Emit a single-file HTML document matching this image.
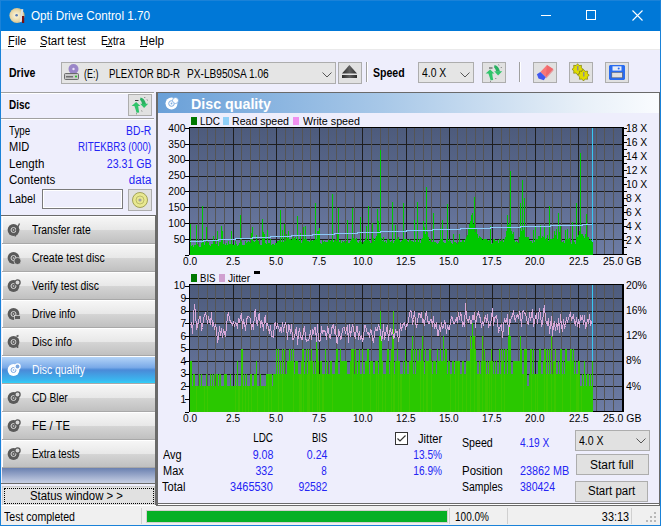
<!DOCTYPE html>
<html><head><meta charset="utf-8"><style>
*{margin:0;padding:0;box-sizing:border-box}
html,body{width:661px;height:526px;overflow:hidden;background:#EEEEFC;font-family:"Liberation Sans",sans-serif}
.t{position:absolute;white-space:pre;transform-origin:0 0}
.r{position:absolute}
svg{position:absolute;left:0;top:0}
</style></head><body>
<div class="r" style="left:0px;top:0px;width:661px;height:31px;background:#0078D7"></div>
<div class="t" style="left: 31px; top: 9.92px; font-size: 12.5px; line-height: 12.5px; color: rgb(255, 255, 255); transform: scaleX(0.936);">Opti Drive Control 1.70</div>
<div class="r" style="left:541px;top:15px;width:10px;height:1px;background:#fff"></div>
<div class="r" style="left:586px;top:10px;width:10px;height:10px;border:1px solid #fff"></div>
<svg width="661" height="30" style="left:0;top:0"><path d="M632.5 10.5 L642.5 20.5 M642.5 10.5 L632.5 20.5" stroke="#fff" stroke-width="1.1"></path></svg>
<svg width="20" height="20" style="left:8px;top:6px" viewBox="0 0 20 20">
<defs><radialGradient id="dg" cx="0.45" cy="0.5" r="0.6"><stop offset="0" stop-color="#fff8e0"></stop><stop offset="0.6" stop-color="#e8d8a8"></stop><stop offset="1" stop-color="#c8b078"></stop></radialGradient></defs>
<circle cx="9" cy="9.5" r="7.6" fill="url(#dg)"></circle><circle cx="8.6" cy="9.3" r="1.3" fill="#5a7ab0"></circle>
<rect x="12.5" y="3" width="2" height="13" fill="#e0e0e0" transform="rotate(8 13 9)"></rect><rect x="14" y="10" width="2.2" height="7" fill="#7a1010"></rect></svg>
<div class="r" style="left:0px;top:0px;width:1px;height:526px;background:#1a82d8"></div>
<div class="r" style="left:0px;top:0px;width:661px;height:1px;background:#1a82d8"></div>
<div class="r" style="left:660px;top:0px;width:1px;height:526px;background:#1a82d8"></div>
<div class="r" style="left:0px;top:525px;width:661px;height:1px;background:#1a82d8"></div>
<div class="r" style="left:1px;top:31px;width:659px;height:18px;background:#fff"></div>
<div class="r" style="left:1px;top:49px;width:659px;height:1px;background:#EAEAEA"></div>
<div class="t" style="left: 8.2px; top: 35.34px; font-size: 12px; line-height: 12px; color: rgb(0, 0, 0); transform: scaleX(0.9409);">File</div>
<div class="t" style="left: 40px; top: 35.34px; font-size: 12px; line-height: 12px; color: rgb(0, 0, 0); transform: scaleX(0.9535);">Start test</div>
<div class="t" style="left: 100.8px; top: 35.34px; font-size: 12px; line-height: 12px; color: rgb(0, 0, 0); transform: scaleX(0.8567);">Extra</div>
<div class="t" style="left: 139.5px; top: 35.34px; font-size: 12px; line-height: 12px; color: rgb(0, 0, 0); transform: scaleX(0.9722);">Help</div>
<div class="r" style="left:8px;top:46px;width:6px;height:1px;background:#000"></div>
<div class="r" style="left:40px;top:46px;width:6px;height:1px;background:#000"></div>
<div class="r" style="left:106px;top:46px;width:6px;height:1px;background:#000"></div>
<div class="r" style="left:140px;top:46px;width:7px;height:1px;background:#000"></div>
<div class="t" style="left: 9.4px; top: 67.34px; font-size: 12px; line-height: 12px; color: rgb(0, 0, 0); font-weight: bold; transform: scaleX(0.8791);">Drive</div>
<div class="r" style="left:61px;top:62px;width:275px;height:22px;background:#E5E5E5;border:1px solid #ADADAD"></div>
<div class="t" style="left: 84.4px; top: 67.84px; font-size: 12px; line-height: 12px; color: rgb(0, 0, 0); transform: scaleX(0.7444);">(E:)</div>
<div class="t" style="left: 108.7px; top: 67.84px; font-size: 12px; line-height: 12px; color: rgb(0, 0, 0); transform: scaleX(0.8025);">PLEXTOR BD-R</div>
<div class="t" style="left: 186.5px; top: 67.84px; font-size: 12px; line-height: 12px; color: rgb(0, 0, 0); transform: scaleX(0.8444);">PX-LB950SA 1.06</div>
<svg width="12" height="8" style="left:322px;top:71px"><path d="M0.5 1.5 L5 6 L9.5 1.5" stroke="#555" stroke-width="1" fill="none"></path></svg>
<svg width="18" height="18" style="left:63px;top:63px" viewBox="0 0 18 18">
<circle cx="10.5" cy="6" r="5" fill="#9a86c8"></circle><circle cx="10.5" cy="6" r="1.2" fill="#e8e0f8"></circle>
<rect x="1.5" y="10.5" width="14" height="6" rx="1" fill="#c8c8c8" stroke="#606060" stroke-width="0.9"></rect>
<rect x="3" y="13" width="7" height="1.5" fill="#707070"></rect><circle cx="13" cy="13.6" r="1" fill="#20c020"></circle></svg>
<div class="r" style="left:338px;top:62px;width:24px;height:22px;background:#E1E1E1;border:1px solid #ADADAD"></div>
<svg width="24" height="22" style="left:338px;top:62px"><defs><linearGradient id="ej" x1="0" y1="0" x2="1" y2="0"><stop offset="0" stop-color="#2a2a2a"></stop><stop offset="0.5" stop-color="#606060"></stop><stop offset="1" stop-color="#2a2a2a"></stop></linearGradient></defs><path d="M4 11.4 L11.4 3 L19 11.4 Z" fill="url(#ej)"></path><rect x="4" y="13" width="15" height="3" fill="url(#ej)"></rect></svg>
<div class="r" style="left:366px;top:62px;width:1px;height:20px;background:#A0A0A0"></div>
<div class="r" style="left:367px;top:62px;width:1px;height:20px;background:#fff"></div>
<div class="t" style="left: 373px; top: 67.34px; font-size: 12px; line-height: 12px; color: rgb(0, 0, 0); font-weight: bold; transform: scaleX(0.8802);">Speed</div>
<div class="r" style="left:418px;top:62px;width:56px;height:21px;background:#E5E5E5;border:1px solid #ADADAD"></div>
<div class="t" style="left: 421.8px; top: 67.34px; font-size: 12px; line-height: 12px; color: rgb(0, 0, 0); transform: scaleX(0.8633);">4.0 X</div>
<svg width="12" height="8" style="left:460px;top:71px"><path d="M0.5 1.5 L5 6 L9.5 1.5" stroke="#555" stroke-width="1" fill="none"></path></svg>
<div class="r" style="left:482px;top:62px;width:24px;height:21px;background:#E1E1E1;border:1px solid #ADADAD"></div>
<svg width="24" height="21" style="left:482px;top:62px" viewBox="0 0 24 21">
<path d="M3.6 11.6 L8.1 7.4 L12.4 11.6 L10.2 11.6 Q10.6 15.2 11.2 18 L8.6 18.2 Q7.6 15 6.4 11.6 Z" fill="#2fc46a"></path>
<path d="M12.2 9.3 L20.2 9.3 L16.1 13.6 Z" fill="#2fc46a"></path>
<path d="M12.6 3 Q16.6 4 18 9.4 L14.2 9.4 Q13.6 6.6 12 5.2 Z" fill="#2ab062"></path>
<rect x="7" y="5.5" width="3.5" height="1" fill="#404040"></rect>
<path d="M8 19 L9 19.6 M13.6 16 L14 17 M16.5 2.5 L17 3.5 M19 5 L19.5 6" stroke="#505050" stroke-width="0.7"></path></svg>
<div class="r" style="left:519px;top:62px;width:1px;height:20px;background:#A0A0A0"></div>
<div class="r" style="left:520px;top:62px;width:1px;height:20px;background:#fff"></div>
<div class="r" style="left:533px;top:62px;width:24px;height:21px;background:#E1E1E1;border:1px solid #ADADAD"></div>
<svg width="24" height="21" style="left:533px;top:62px" viewBox="0 0 24 21">
<path d="M7.4 9.9 L14 2.9 L20.2 6.9 L12.8 15.3 Z" fill="#f87878"></path><path d="M14 2.9 L20.2 6.9 L20.5 8.5 L13.2 16.5 L12.8 15.3 Z" fill="#e85a60" opacity="0.5"></path>
<path d="M3.9 12.3 L7.4 9.9 L12.8 15.3 L10.8 18.3 L5.5 16.5 Z" fill="#4058f0"></path></svg>
<div class="r" style="left:569px;top:62px;width:24px;height:21px;background:#E1E1E1;border:1px solid #ADADAD"></div>
<svg width="24" height="21" style="left:569px;top:62px" viewBox="0 0 24 21">
<polygon points="14.20,7.30 12.33,8.84 12.56,11.26 10.14,11.03 8.60,12.90 7.06,11.03 4.64,11.26 4.87,8.84 3.00,7.30 4.87,5.76 4.64,3.34 7.06,3.57 8.60,1.70 10.14,3.57 12.56,3.34 12.33,5.76" fill="#e0dc00" stroke="#707000" stroke-width="0.6" stroke-linejoin="round"></polygon>
<polygon points="20.30,13.20 18.36,14.80 18.60,17.30 16.10,17.06 14.50,19.00 12.90,17.06 10.40,17.30 10.64,14.80 8.70,13.20 10.64,11.60 10.40,9.10 12.90,9.34 14.50,7.40 16.10,9.34 18.60,9.10 18.36,11.60" fill="#e0dc00" stroke="#707000" stroke-width="0.6" stroke-linejoin="round"></polygon>
<rect x="8" y="4" width="1.5" height="4.5" fill="#909090"></rect><rect x="14" y="10" width="1.5" height="4.5" fill="#909090"></rect></svg>
<div class="r" style="left:605px;top:62px;width:24px;height:21px;background:#E1E1E1;border:1px solid #ADADAD"></div>
<svg width="24" height="21" style="left:605px;top:62px" viewBox="0 0 24 21">
<path d="M4 4 L5 3 L19 3 L20 4 L20 17 L19 18 L5 18 L4 17 Z" fill="#2a6cf0"></path><rect x="7.5" y="4.3" width="9" height="4.3" fill="#e8eef8"></rect><circle cx="13.7" cy="6.4" r="1" fill="#2a6cf0"></circle><rect x="6.8" y="10.3" width="10.5" height="5.5" fill="#e0e0e0" stroke="#505a70" stroke-width="0.6"></rect></svg>
<div class="r" style="left:1px;top:92px;width:153px;height:1px;background:#A0A0A0"></div>
<div class="r" style="left:1px;top:93px;width:153px;height:1px;background:#fff"></div>
<div class="t" style="left: 9px; top: 99.34px; font-size: 12px; line-height: 12px; color: rgb(0, 0, 0); font-weight: bold; transform: scaleX(0.8281);">Disc</div>
<div class="r" style="left:128px;top:94px;width:24px;height:22px;background:#E1E1E1;border:1px solid #ADADAD"></div>
<svg width="24" height="22" style="left:128px;top:94px" viewBox="0 0 24 21">
<path d="M3.6 11.6 L8.1 7.4 L12.4 11.6 L10.2 11.6 Q10.6 15.2 11.2 18 L8.6 18.2 Q7.6 15 6.4 11.6 Z" fill="#2fc46a"></path>
<path d="M12.2 9.3 L20.2 9.3 L16.1 13.6 Z" fill="#2fc46a"></path>
<path d="M12.6 3 Q16.6 4 18 9.4 L14.2 9.4 Q13.6 6.6 12 5.2 Z" fill="#2ab062"></path>
<rect x="7" y="5.5" width="3.5" height="1" fill="#404040"></rect>
<path d="M8 19 L9 19.6 M13.6 16 L14 17 M16.5 2.5 L17 3.5 M19 5 L19.5 6" stroke="#505050" stroke-width="0.7"></path></svg>
<div class="r" style="left:1px;top:118px;width:153px;height:1px;background:#A0A0A0"></div>
<div class="r" style="left:1px;top:119px;width:153px;height:1px;background:#fff"></div>
<div class="t" style="left: 9px; top: 125.34px; font-size: 12px; line-height: 12px; color: rgb(0, 0, 0); transform: scaleX(0.8149);">Type</div>
<div class="t" style="right: 509.5px; top: 125.34px; font-size: 12px; line-height: 12px; color: rgb(36, 36, 244); transform-origin: 100% 0px; transform: scaleX(0.8622);">BD-R</div>
<div class="t" style="left: 9px; top: 141.34px; font-size: 12px; line-height: 12px; color: rgb(0, 0, 0); transform: scaleX(0.9227);">MID</div>
<div class="t" style="right: 509.5px; top: 141.34px; font-size: 12px; line-height: 12px; color: rgb(36, 36, 244); transform-origin: 100% 0px; transform: scaleX(0.8108);">RITEKBR3 (000)</div>
<div class="t" style="left: 9px; top: 157.84px; font-size: 12px; line-height: 12px; color: rgb(0, 0, 0); transform: scaleX(0.9645);">Length</div>
<div class="t" style="right: 509.5px; top: 157.84px; font-size: 12px; line-height: 12px; color: rgb(36, 36, 244); transform-origin: 100% 0px; transform: scaleX(0.8875);">23.31 GB</div>
<div class="t" style="left: 9px; top: 174.34px; font-size: 12px; line-height: 12px; color: rgb(0, 0, 0); transform: scaleX(0.9619);">Contents</div>
<div class="t" style="right: 509.5px; top: 174.34px; font-size: 12px; line-height: 12px; color: rgb(36, 36, 244); transform-origin: 100% 0px; transform: scaleX(0.9632);">data</div>
<div class="t" style="left: 9px; top: 193.34px; font-size: 12px; line-height: 12px; color: rgb(0, 0, 0); transform: scaleX(0.8987);">Label</div>
<div class="r" style="left:42px;top:189px;width:81px;height:20px;background:#EEEEFC;border:1px solid #7A7A7A;box-shadow:inset 0 0 0 1px #fff"></div>
<div class="r" style="left:128px;top:189px;width:24px;height:22px;background:#E1E1E1;border:1px solid #ADADAD"></div>
<svg width="24" height="22" style="left:128px;top:189px" viewBox="0 0 24 22">
<circle cx="12" cy="11" r="7.5" fill="#e8e890" stroke="#909040" stroke-width="0.8"></circle><circle cx="12" cy="11" r="4" fill="none" stroke="#b0b060" stroke-width="0.8"></circle><circle cx="12" cy="11" r="1.6" fill="#a0a0a0"></circle></svg>
<div class="r" style="left:1px;top:215px;width:156px;height:1px;background:#6A6A6A"></div>
<div class="r" style="left:155px;top:215px;width:2px;height:290px;background:#6A6A6A"></div>
<div class="r" style="left:2px;top:216px;width:153px;height:27px;background:linear-gradient(#f6f6f6 0%,#e8e8e8 48%,#d4d4d4 52%,#c0c0c0 100%);border-top:1px solid #fff;border-left:1px solid #fff"></div>
<div class="r" style="left:2px;top:243px;width:153px;height:1px;background:#a8a8a8"></div>
<div class="t" style="left: 31.5px; top: 223.84px; font-size: 12px; line-height: 12px; color: rgb(0, 0, 0); transform: scaleX(0.8601);">Transfer rate</div>
<svg width="16" height="16" style="left:6px;top:222px" viewBox="0 0 16 16">
<circle cx="7.5" cy="8" r="5.9" fill="#5a5a5a"></circle><circle cx="7.5" cy="8" r="2.5" fill="none" stroke="#d8d8d8" stroke-width="1"></circle><circle cx="7.5" cy="8" r="0.8" fill="#d8d8d8"></circle><path d="M13.5 1.5 L10.5 8 L12.5 8 L9 14.5" stroke="#5a5a5a" stroke-width="1.3" fill="none"></path></svg>
<div class="r" style="left:2px;top:244px;width:153px;height:27px;background:linear-gradient(#f6f6f6 0%,#e8e8e8 48%,#d4d4d4 52%,#c0c0c0 100%);border-top:1px solid #fff;border-left:1px solid #fff"></div>
<div class="r" style="left:2px;top:271px;width:153px;height:1px;background:#a8a8a8"></div>
<div class="t" style="left: 31.5px; top: 251.84px; font-size: 12px; line-height: 12px; color: rgb(0, 0, 0); transform: scaleX(0.872);">Create test disc</div>
<svg width="16" height="16" style="left:6px;top:250px" viewBox="0 0 16 16">
<circle cx="7.5" cy="8" r="5.9" fill="#5a5a5a"></circle><circle cx="7.5" cy="8" r="2.5" fill="none" stroke="#d8d8d8" stroke-width="1"></circle><circle cx="7.5" cy="8" r="0.8" fill="#d8d8d8"></circle><circle cx="11.5" cy="11" r="3.6" fill="#5a5a5a" stroke="#d8d8d8" stroke-width="0.8"></circle></svg>
<div class="r" style="left:2px;top:272px;width:153px;height:27px;background:linear-gradient(#f6f6f6 0%,#e8e8e8 48%,#d4d4d4 52%,#c0c0c0 100%);border-top:1px solid #fff;border-left:1px solid #fff"></div>
<div class="r" style="left:2px;top:299px;width:153px;height:1px;background:#a8a8a8"></div>
<div class="t" style="left: 31.5px; top: 279.84px; font-size: 12px; line-height: 12px; color: rgb(0, 0, 0); transform: scaleX(0.8659);">Verify test disc</div>
<svg width="16" height="16" style="left:6px;top:278px" viewBox="0 0 16 16">
<circle cx="7.5" cy="8" r="5.9" fill="#5a5a5a"></circle><circle cx="7.5" cy="8" r="2.5" fill="none" stroke="#d8d8d8" stroke-width="1"></circle><circle cx="7.5" cy="8" r="0.8" fill="#d8d8d8"></circle><circle cx="11.5" cy="4.5" r="2.6" fill="#d8d8d8" stroke="#5a5a5a" stroke-width="1.3"></circle></svg>
<div class="r" style="left:2px;top:300px;width:153px;height:27px;background:linear-gradient(#f6f6f6 0%,#e8e8e8 48%,#d4d4d4 52%,#c0c0c0 100%);border-top:1px solid #fff;border-left:1px solid #fff"></div>
<div class="r" style="left:2px;top:327px;width:153px;height:1px;background:#a8a8a8"></div>
<div class="t" style="left: 31.5px; top: 307.84px; font-size: 12px; line-height: 12px; color: rgb(0, 0, 0); transform: scaleX(0.8602);">Drive info</div>
<svg width="16" height="16" style="left:6px;top:306px" viewBox="0 0 16 16">
<circle cx="7.5" cy="8" r="5.9" fill="#5a5a5a"></circle><circle cx="7.5" cy="8" r="2.5" fill="none" stroke="#d8d8d8" stroke-width="1"></circle><circle cx="7.5" cy="8" r="0.8" fill="#d8d8d8"></circle><rect x="8.5" y="9.5" width="6" height="4" fill="#5a5a5a" stroke="#d8d8d8" stroke-width="0.8"></rect></svg>
<div class="r" style="left:2px;top:328px;width:153px;height:27px;background:linear-gradient(#f6f6f6 0%,#e8e8e8 48%,#d4d4d4 52%,#c0c0c0 100%);border-top:1px solid #fff;border-left:1px solid #fff"></div>
<div class="r" style="left:2px;top:355px;width:153px;height:1px;background:#a8a8a8"></div>
<div class="t" style="left: 31.5px; top: 335.84px; font-size: 12px; line-height: 12px; color: rgb(0, 0, 0); transform: scaleX(0.8693);">Disc info</div>
<svg width="16" height="16" style="left:6px;top:334px" viewBox="0 0 16 16">
<circle cx="7.5" cy="8" r="5.9" fill="#5a5a5a"></circle><circle cx="7.5" cy="8" r="2.5" fill="none" stroke="#d8d8d8" stroke-width="1"></circle><circle cx="7.5" cy="8" r="0.8" fill="#d8d8d8"></circle><path d="M11.5 4 L11.5 14 M10.5 2.5 L12.5 1.5" stroke="#5a5a5a" stroke-width="1.6"></path></svg>
<div class="r" style="left:2px;top:356px;width:153px;height:27px;background:linear-gradient(#b4d4f8 0%,#7aaae8 40%,#4a8ad8 50%,#3ab8f0 90%,#30d0f8 100%);border-top:1px solid #fff"></div>
<div class="r" style="left:2px;top:383px;width:153px;height:1px;background:#a8a8a8"></div>
<div class="t" style="left: 31.5px; top: 363.84px; font-size: 12px; line-height: 12px; color: rgb(255, 255, 255); transform: scaleX(0.8638);">Disc quality</div>
<svg width="16" height="16" style="left:6px;top:362px" viewBox="0 0 16 16">
<circle cx="7.5" cy="8" r="5.9" fill="#fff"></circle><circle cx="7.5" cy="8" r="2.5" fill="none" stroke="#7aa6e0" stroke-width="1"></circle><circle cx="7.5" cy="8" r="0.8" fill="#7aa6e0"></circle><circle cx="11.5" cy="4.5" r="2.6" fill="#7aa6e0" stroke="#fff" stroke-width="1.3"></circle></svg>
<div class="r" style="left:2px;top:384px;width:153px;height:27px;background:linear-gradient(#f6f6f6 0%,#e8e8e8 48%,#d4d4d4 52%,#c0c0c0 100%);border-top:1px solid #fff;border-left:1px solid #fff"></div>
<div class="r" style="left:2px;top:411px;width:153px;height:1px;background:#a8a8a8"></div>
<div class="t" style="left: 31.5px; top: 391.84px; font-size: 12px; line-height: 12px; color: rgb(0, 0, 0); transform: scaleX(0.8497);">CD Bler</div>
<svg width="16" height="16" style="left:6px;top:390px" viewBox="0 0 16 16">
<circle cx="7.5" cy="8" r="5.9" fill="#5a5a5a"></circle><circle cx="7.5" cy="8" r="2.5" fill="none" stroke="#d8d8d8" stroke-width="1"></circle><circle cx="7.5" cy="8" r="0.8" fill="#d8d8d8"></circle><circle cx="11.5" cy="4.5" r="2.6" fill="#d8d8d8" stroke="#5a5a5a" stroke-width="1.3"></circle></svg>
<div class="r" style="left:2px;top:412px;width:153px;height:27px;background:linear-gradient(#f6f6f6 0%,#e8e8e8 48%,#d4d4d4 52%,#c0c0c0 100%);border-top:1px solid #fff;border-left:1px solid #fff"></div>
<div class="r" style="left:2px;top:439px;width:153px;height:1px;background:#a8a8a8"></div>
<div class="t" style="left: 31.5px; top: 419.84px; font-size: 12px; line-height: 12px; color: rgb(0, 0, 0); transform: scaleX(0.9394);">FE / TE</div>
<svg width="16" height="16" style="left:6px;top:418px" viewBox="0 0 16 16">
<circle cx="7.5" cy="8" r="5.9" fill="#5a5a5a"></circle><circle cx="7.5" cy="8" r="2.5" fill="none" stroke="#d8d8d8" stroke-width="1"></circle><circle cx="7.5" cy="8" r="0.8" fill="#d8d8d8"></circle><circle cx="11.5" cy="4.5" r="2.6" fill="#d8d8d8" stroke="#5a5a5a" stroke-width="1.3"></circle></svg>
<div class="r" style="left:2px;top:440px;width:153px;height:27px;background:linear-gradient(#f6f6f6 0%,#e8e8e8 48%,#d4d4d4 52%,#c0c0c0 100%);border-top:1px solid #fff;border-left:1px solid #fff"></div>
<div class="r" style="left:2px;top:467px;width:153px;height:1px;background:#a8a8a8"></div>
<div class="t" style="left: 31.5px; top: 447.84px; font-size: 12px; line-height: 12px; color: rgb(0, 0, 0); transform: scaleX(0.8379);">Extra tests</div>
<svg width="16" height="16" style="left:6px;top:446px" viewBox="0 0 16 16">
<circle cx="7.5" cy="8" r="5.9" fill="#5a5a5a"></circle><circle cx="7.5" cy="8" r="2.5" fill="none" stroke="#d8d8d8" stroke-width="1"></circle><circle cx="7.5" cy="8" r="0.8" fill="#d8d8d8"></circle><circle cx="11.5" cy="4.5" r="2.6" fill="#d8d8d8" stroke="#5a5a5a" stroke-width="1.3"></circle></svg>
<div class="r" style="left:2px;top:468px;width:153px;height:15px;background:linear-gradient(#6a80b0,#c8d0e4)"></div>
<div class="r" style="left:1px;top:483px;width:156px;height:1px;background:#6A6A6A"></div>
<div class="r" style="left:2px;top:486px;width:153px;height:20px;background:#E1E1E1;border:1px solid #D0D0D0"></div>
<div class="r" style="left:4px;top:488px;width:150px;height:16px;border:1px dotted #000"></div>
<div class="t" style="left: 30.2px; top: 490.34px; font-size: 12px; line-height: 12px; color: rgb(0, 0, 0); transform: scaleX(0.9484);">Status window &gt; &gt;</div>
<div class="r" style="left:1px;top:506px;width:659px;height:19px;background:#F0F0F0"></div>
<div class="r" style="left:1px;top:505px;width:659px;height:1px;background:#fff"></div>
<div class="t" style="left: 3.5px; top: 511.34px; font-size: 12px; line-height: 12px; color: rgb(0, 0, 0); transform: scaleX(0.8796);">Test completed</div>
<div class="r" style="left:141px;top:508px;width:1px;height:16px;background:#D0D0D0"></div>
<div class="r" style="left:146px;top:510px;width:302px;height:13px;background:#06B025;border:1px solid #D4D0D0"></div>
<div class="r" style="left:449px;top:508px;width:1px;height:16px;background:#D0D0D0"></div>
<div class="t" style="left: 454.5px; top: 510.84px; font-size: 12px; line-height: 12px; color: rgb(0, 0, 0); transform: scaleX(0.8353);">100.0%</div>
<div class="r" style="left:507px;top:508px;width:1px;height:16px;background:#D0D0D0"></div>
<div class="t" style="right: 31.8px; top: 510.84px; font-size: 12px; line-height: 12px; color: rgb(0, 0, 0); transform-origin: 100% 0px; transform: scaleX(0.9057);">33:13</div>
<div class="r" style="left:631px;top:508px;width:1px;height:16px;background:#D0D0D0"></div>
<svg width="12" height="12" style="left:646px;top:512px"><rect x="8" y="0" width="2" height="2" fill="#B8B8B8"></rect><rect x="8" y="4" width="2" height="2" fill="#B8B8B8"></rect><rect x="4" y="4" width="2" height="2" fill="#B8B8B8"></rect><rect x="8" y="8" width="2" height="2" fill="#B8B8B8"></rect><rect x="4" y="8" width="2" height="2" fill="#B8B8B8"></rect><rect x="0" y="8" width="2" height="2" fill="#B8B8B8"></rect></svg>
<div class="r" style="left:156px;top:92px;width:504px;height:414px;border:1px solid #6A6A6A;border-left:2px solid #6A6A6A"></div>
<div class="r" style="left:158px;top:503px;width:501px;height:1px;background:#6A6A6A"></div>
<div class="r" style="left:158px;top:504px;width:501px;height:1px;background:#fff"></div>
<div class="r" style="left:158px;top:93px;width:501px;height:20px;background:linear-gradient(90deg,#6aa0d8 0%,#a8c8e8 45%,#e8f0f8 85%,#fafcff 100%)"></div>
<svg width="16" height="16" style="left:164px;top:95px" viewBox="0 0 16 16">
<circle cx="7.5" cy="8.5" r="6" fill="#fff"></circle><circle cx="7.5" cy="8.5" r="2.8" fill="none" stroke="#7aaae0" stroke-width="1"></circle><circle cx="7.5" cy="8.5" r="0.9" fill="#7aaae0"></circle>
<circle cx="11.5" cy="5.5" r="3" fill="#fff" stroke="#7aaae0" stroke-width="0.8"></circle></svg>
<div class="t" style="left: 190.5px; top: 97.23px; font-size: 14.5px; line-height: 14.5px; color: rgb(255, 255, 255); font-weight: bold; transform: scaleX(0.9829);">Disc quality</div>
<svg width="661" height="526" style="left:0;top:0" shape-rendering="crispEdges"><defs><linearGradient id="pg" x1="0" y1="0" x2="0" y2="1"><stop offset="0" stop-color="#4d5b7c"></stop><stop offset="1" stop-color="#6d7ca4"></stop></linearGradient></defs><rect x="190" y="128" width="432" height="126" fill="url(#pg)"></rect><rect x="190" y="239" width="432" height="1" fill="#1e1e1e"></rect><rect x="190" y="223" width="432" height="1" fill="#1e1e1e"></rect><rect x="190" y="207" width="432" height="1" fill="#1e1e1e"></rect><rect x="190" y="191" width="432" height="1" fill="#1e1e1e"></rect><rect x="190" y="176" width="432" height="1" fill="#1e1e1e"></rect><rect x="190" y="160" width="432" height="1" fill="#1e1e1e"></rect><rect x="190" y="144" width="432" height="1" fill="#1e1e1e"></rect><rect x="198" y="128" width="1" height="126" fill="#555555"></rect><rect x="207" y="128" width="1" height="126" fill="#555555"></rect><rect x="215" y="128" width="1" height="126" fill="#555555"></rect><rect x="224" y="128" width="1" height="126" fill="#555555"></rect><rect x="233" y="128" width="1" height="126" fill="#1e1e1e"></rect><rect x="241" y="128" width="1" height="126" fill="#555555"></rect><rect x="250" y="128" width="1" height="126" fill="#555555"></rect><rect x="259" y="128" width="1" height="126" fill="#555555"></rect><rect x="267" y="128" width="1" height="126" fill="#555555"></rect><rect x="276" y="128" width="1" height="126" fill="#1e1e1e"></rect><rect x="285" y="128" width="1" height="126" fill="#555555"></rect><rect x="293" y="128" width="1" height="126" fill="#555555"></rect><rect x="302" y="128" width="1" height="126" fill="#555555"></rect><rect x="310" y="128" width="1" height="126" fill="#555555"></rect><rect x="319" y="128" width="1" height="126" fill="#1e1e1e"></rect><rect x="328" y="128" width="1" height="126" fill="#555555"></rect><rect x="336" y="128" width="1" height="126" fill="#555555"></rect><rect x="345" y="128" width="1" height="126" fill="#555555"></rect><rect x="354" y="128" width="1" height="126" fill="#555555"></rect><rect x="362" y="128" width="1" height="126" fill="#1e1e1e"></rect><rect x="371" y="128" width="1" height="126" fill="#555555"></rect><rect x="380" y="128" width="1" height="126" fill="#555555"></rect><rect x="388" y="128" width="1" height="126" fill="#555555"></rect><rect x="397" y="128" width="1" height="126" fill="#555555"></rect><rect x="406" y="128" width="1" height="126" fill="#1e1e1e"></rect><rect x="414" y="128" width="1" height="126" fill="#555555"></rect><rect x="423" y="128" width="1" height="126" fill="#555555"></rect><rect x="431" y="128" width="1" height="126" fill="#555555"></rect><rect x="440" y="128" width="1" height="126" fill="#555555"></rect><rect x="449" y="128" width="1" height="126" fill="#1e1e1e"></rect><rect x="457" y="128" width="1" height="126" fill="#555555"></rect><rect x="466" y="128" width="1" height="126" fill="#555555"></rect><rect x="475" y="128" width="1" height="126" fill="#555555"></rect><rect x="483" y="128" width="1" height="126" fill="#555555"></rect><rect x="492" y="128" width="1" height="126" fill="#1e1e1e"></rect><rect x="501" y="128" width="1" height="126" fill="#555555"></rect><rect x="509" y="128" width="1" height="126" fill="#555555"></rect><rect x="518" y="128" width="1" height="126" fill="#555555"></rect><rect x="526" y="128" width="1" height="126" fill="#555555"></rect><rect x="535" y="128" width="1" height="126" fill="#1e1e1e"></rect><rect x="544" y="128" width="1" height="126" fill="#555555"></rect><rect x="552" y="128" width="1" height="126" fill="#555555"></rect><rect x="561" y="128" width="1" height="126" fill="#555555"></rect><rect x="570" y="128" width="1" height="126" fill="#555555"></rect><rect x="578" y="128" width="1" height="126" fill="#1e1e1e"></rect><rect x="587" y="128" width="1" height="126" fill="#555555"></rect><rect x="596" y="128" width="1" height="126" fill="#555555"></rect><rect x="604" y="128" width="1" height="126" fill="#555555"></rect><rect x="613" y="128" width="1" height="126" fill="#555555"></rect><rect x="190" y="254" width="432" height="1" fill="#000"></rect><rect x="592" y="128" width="1" height="126" fill="#38c8f0"></rect><path d="M190 224h1V255h-1ZM191 246h1V255h-1ZM192 245h1V255h-1ZM193 247h1V255h-1ZM194 245h1V255h-1ZM195 245h1V255h-1ZM196 225h1V255h-1ZM197 244h1V255h-1ZM198 246h1V255h-1ZM199 247h1V255h-1ZM200 247h1V255h-1ZM201 243h1V255h-1ZM202 206h1V255h-1ZM203 242h1V255h-1ZM204 245h1V255h-1ZM205 242h1V255h-1ZM206 227h1V255h-1ZM207 243h1V255h-1ZM208 242h1V255h-1ZM209 245h1V255h-1ZM210 246h1V255h-1ZM211 244h1V255h-1ZM212 244h1V255h-1ZM213 236h1V255h-1ZM214 240h1V255h-1ZM215 244h1V255h-1ZM216 244h1V255h-1ZM217 231h1V255h-1ZM218 246h1V255h-1ZM219 242h1V255h-1ZM220 242h1V255h-1ZM221 226h1V255h-1ZM222 231h1V255h-1ZM223 244h1V255h-1ZM224 244h1V255h-1ZM225 245h1V255h-1ZM226 243h1V255h-1ZM227 245h1V255h-1ZM228 241h1V255h-1ZM229 244h1V255h-1ZM230 244h1V255h-1ZM231 231h1V255h-1ZM232 244h1V255h-1ZM233 245h1V255h-1ZM234 245h1V255h-1ZM235 241h1V255h-1ZM236 244h1V255h-1ZM237 246h1V255h-1ZM238 245h1V255h-1ZM239 243h1V255h-1ZM240 215h1V255h-1ZM241 242h1V255h-1ZM242 245h1V255h-1ZM243 245h1V255h-1ZM244 245h1V255h-1ZM245 241h1V255h-1ZM246 243h1V255h-1ZM247 242h1V255h-1ZM248 241h1V255h-1ZM249 242h1V255h-1ZM250 243h1V255h-1ZM251 233h1V255h-1ZM252 227h1V255h-1ZM253 241h1V255h-1ZM254 242h1V255h-1ZM255 241h1V255h-1ZM256 235h1V255h-1ZM257 240h1V255h-1ZM258 241h1V255h-1ZM259 244h1V255h-1ZM260 245h1V255h-1ZM261 245h1V255h-1ZM262 219h1V255h-1ZM263 232h1V255h-1ZM264 234h1V255h-1ZM265 243h1V255h-1ZM266 244h1V255h-1ZM267 230h1V255h-1ZM268 243h1V255h-1ZM269 243h1V255h-1ZM270 239h1V255h-1ZM271 245h1V255h-1ZM272 244h1V255h-1ZM273 244h1V255h-1ZM274 245h1V255h-1ZM275 243h1V255h-1ZM276 243h1V255h-1ZM277 241h1V255h-1ZM278 241h1V255h-1ZM279 240h1V255h-1ZM280 210h1V255h-1ZM281 242h1V255h-1ZM282 230h1V255h-1ZM283 242h1V255h-1ZM284 224h1V255h-1ZM285 241h1V255h-1ZM286 234h1V255h-1ZM287 238h1V255h-1ZM288 231h1V255h-1ZM289 239h1V255h-1ZM290 239h1V255h-1ZM291 240h1V255h-1ZM292 237h1V255h-1ZM293 239h1V255h-1ZM294 238h1V255h-1ZM295 237h1V255h-1ZM296 240h1V255h-1ZM297 216h1V255h-1ZM298 239h1V255h-1ZM299 241h1V255h-1ZM300 233h1V255h-1ZM301 243h1V255h-1ZM302 241h1V255h-1ZM303 227h1V255h-1ZM304 239h1V255h-1ZM305 226h1V255h-1ZM306 239h1V255h-1ZM307 241h1V255h-1ZM308 241h1V255h-1ZM309 242h1V255h-1ZM310 241h1V255h-1ZM311 240h1V255h-1ZM312 241h1V255h-1ZM313 240h1V255h-1ZM314 240h1V255h-1ZM315 203h1V255h-1ZM316 239h1V255h-1ZM317 231h1V255h-1ZM318 231h1V255h-1ZM319 228h1V255h-1ZM320 243h1V255h-1ZM321 244h1V255h-1ZM322 240h1V255h-1ZM323 242h1V255h-1ZM324 241h1V255h-1ZM325 242h1V255h-1ZM326 242h1V255h-1ZM327 242h1V255h-1ZM328 240h1V255h-1ZM329 240h1V255h-1ZM330 241h1V255h-1ZM331 240h1V255h-1ZM332 194h1V255h-1ZM333 242h1V255h-1ZM334 240h1V255h-1ZM335 239h1V255h-1ZM336 241h1V255h-1ZM337 233h1V255h-1ZM338 208h1V255h-1ZM339 242h1V255h-1ZM340 240h1V255h-1ZM341 243h1V255h-1ZM342 241h1V255h-1ZM343 242h1V255h-1ZM344 241h1V255h-1ZM345 243h1V255h-1ZM346 241h1V255h-1ZM347 220h1V255h-1ZM348 243h1V255h-1ZM349 243h1V255h-1ZM350 241h1V255h-1ZM351 239h1V255h-1ZM352 208h1V255h-1ZM353 238h1V255h-1ZM354 240h1V255h-1ZM355 239h1V255h-1ZM356 238h1V255h-1ZM357 242h1V255h-1ZM358 243h1V255h-1ZM359 241h1V255h-1ZM360 217h1V255h-1ZM361 242h1V255h-1ZM362 244h1V255h-1ZM363 242h1V255h-1ZM364 241h1V255h-1ZM365 238h1V255h-1ZM366 226h1V255h-1ZM367 240h1V255h-1ZM368 206h1V255h-1ZM369 241h1V255h-1ZM370 243h1V255h-1ZM371 243h1V255h-1ZM372 223h1V255h-1ZM373 238h1V255h-1ZM374 241h1V255h-1ZM375 238h1V255h-1ZM376 236h1V255h-1ZM377 209h1V255h-1ZM378 221h1V255h-1ZM379 231h1V255h-1ZM380 150h1V255h-1ZM381 238h1V255h-1ZM382 241h1V255h-1ZM383 237h1V255h-1ZM384 242h1V255h-1ZM385 241h1V255h-1ZM386 243h1V255h-1ZM387 239h1V255h-1ZM388 239h1V255h-1ZM389 240h1V255h-1ZM390 242h1V255h-1ZM391 241h1V255h-1ZM392 202h1V255h-1ZM393 243h1V255h-1ZM394 241h1V255h-1ZM395 225h1V255h-1ZM396 239h1V255h-1ZM397 239h1V255h-1ZM398 237h1V255h-1ZM399 240h1V255h-1ZM400 242h1V255h-1ZM401 241h1V255h-1ZM402 240h1V255h-1ZM403 203h1V255h-1ZM404 239h1V255h-1ZM405 239h1V255h-1ZM406 239h1V255h-1ZM407 241h1V255h-1ZM408 242h1V255h-1ZM409 239h1V255h-1ZM410 240h1V255h-1ZM411 241h1V255h-1ZM412 241h1V255h-1ZM413 242h1V255h-1ZM414 220h1V255h-1ZM415 242h1V255h-1ZM416 240h1V255h-1ZM417 202h1V255h-1ZM418 242h1V255h-1ZM419 239h1V255h-1ZM420 243h1V255h-1ZM421 239h1V255h-1ZM422 238h1V255h-1ZM423 221h1V255h-1ZM424 227h1V255h-1ZM425 234h1V255h-1ZM426 187h1V255h-1ZM427 232h1V255h-1ZM428 237h1V255h-1ZM429 241h1V255h-1ZM430 239h1V255h-1ZM431 242h1V255h-1ZM432 242h1V255h-1ZM433 213h1V255h-1ZM434 242h1V255h-1ZM435 242h1V255h-1ZM436 243h1V255h-1ZM437 244h1V255h-1ZM438 243h1V255h-1ZM439 241h1V255h-1ZM440 228h1V255h-1ZM441 239h1V255h-1ZM442 220h1V255h-1ZM443 242h1V255h-1ZM444 243h1V255h-1ZM445 243h1V255h-1ZM446 239h1V255h-1ZM447 204h1V255h-1ZM448 241h1V255h-1ZM449 239h1V255h-1ZM450 241h1V255h-1ZM451 243h1V255h-1ZM452 244h1V255h-1ZM453 234h1V255h-1ZM454 242h1V255h-1ZM455 242h1V255h-1ZM456 243h1V255h-1ZM457 244h1V255h-1ZM458 242h1V255h-1ZM459 234h1V255h-1ZM460 242h1V255h-1ZM461 242h1V255h-1ZM462 240h1V255h-1ZM463 240h1V255h-1ZM464 242h1V255h-1ZM465 239h1V255h-1ZM466 237h1V255h-1ZM467 235h1V255h-1ZM468 229h1V255h-1ZM469 224h1V255h-1ZM470 221h1V255h-1ZM471 215h1V255h-1ZM472 213h1V255h-1ZM473 224h1V255h-1ZM474 197h1V255h-1ZM475 232h1V255h-1ZM476 229h1V255h-1ZM477 234h1V255h-1ZM478 238h1V255h-1ZM479 236h1V255h-1ZM480 237h1V255h-1ZM481 238h1V255h-1ZM482 240h1V255h-1ZM483 239h1V255h-1ZM484 239h1V255h-1ZM485 239h1V255h-1ZM486 239h1V255h-1ZM487 240h1V255h-1ZM488 241h1V255h-1ZM489 240h1V255h-1ZM490 226h1V255h-1ZM491 244h1V255h-1ZM492 243h1V255h-1ZM493 239h1V255h-1ZM494 239h1V255h-1ZM495 241h1V255h-1ZM496 241h1V255h-1ZM497 240h1V255h-1ZM498 243h1V255h-1ZM499 239h1V255h-1ZM500 241h1V255h-1ZM501 241h1V255h-1ZM502 239h1V255h-1ZM503 242h1V255h-1ZM504 239h1V255h-1ZM505 237h1V255h-1ZM506 231h1V255h-1ZM507 215h1V255h-1ZM508 225h1V255h-1ZM509 223h1V255h-1ZM510 171h1V255h-1ZM511 231h1V255h-1ZM512 234h1V255h-1ZM513 232h1V255h-1ZM514 240h1V255h-1ZM515 242h1V255h-1ZM516 241h1V255h-1ZM517 242h1V255h-1ZM518 243h1V255h-1ZM519 237h1V255h-1ZM520 203h1V255h-1ZM521 231h1V255h-1ZM522 180h1V255h-1ZM523 230h1V255h-1ZM524 198h1V255h-1ZM525 237h1V255h-1ZM526 237h1V255h-1ZM527 237h1V255h-1ZM528 237h1V255h-1ZM529 240h1V255h-1ZM530 241h1V255h-1ZM531 241h1V255h-1ZM532 243h1V255h-1ZM533 230h1V255h-1ZM534 242h1V255h-1ZM535 227h1V255h-1ZM536 239h1V255h-1ZM537 239h1V255h-1ZM538 236h1V255h-1ZM539 236h1V255h-1ZM540 225h1V255h-1ZM541 238h1V255h-1ZM542 236h1V255h-1ZM543 237h1V255h-1ZM544 226h1V255h-1ZM545 239h1V255h-1ZM546 238h1V255h-1ZM547 235h1V255h-1ZM548 241h1V255h-1ZM549 206h1V255h-1ZM550 239h1V255h-1ZM551 239h1V255h-1ZM552 239h1V255h-1ZM553 238h1V255h-1ZM554 231h1V255h-1ZM555 235h1V255h-1ZM556 229h1V255h-1ZM557 239h1V255h-1ZM558 213h1V255h-1ZM559 232h1V255h-1ZM560 225h1V255h-1ZM561 242h1V255h-1ZM562 242h1V255h-1ZM563 241h1V255h-1ZM564 243h1V255h-1ZM565 230h1V255h-1ZM566 239h1V255h-1ZM567 229h1V255h-1ZM568 239h1V255h-1ZM569 238h1V255h-1ZM570 242h1V255h-1ZM571 244h1V255h-1ZM572 222h1V255h-1ZM573 240h1V255h-1ZM574 242h1V255h-1ZM575 244h1V255h-1ZM576 203h1V255h-1ZM577 237h1V255h-1ZM578 235h1V255h-1ZM579 231h1V255h-1ZM580 153h1V255h-1ZM581 234h1V255h-1ZM582 234h1V255h-1ZM583 236h1V255h-1ZM584 238h1V255h-1ZM585 234h1V255h-1ZM586 214h1V255h-1ZM587 237h1V255h-1ZM588 237h1V255h-1ZM589 240h1V255h-1ZM590 239h1V255h-1ZM591 241h1V255h-1ZM592 242h1V255h-1Z" fill="#00C800"></path><path d="M190 241h13v1h-13ZM203 240h15v1h-15ZM203 240h1v2h-1ZM218 239h17v1h-17ZM218 239h1v2h-1ZM235 238h17v1h-17ZM235 238h1v2h-1ZM252 237h18v1h-18ZM252 237h1v2h-1ZM270 236h21v1h-21ZM270 236h1v2h-1ZM291 235h21v1h-21ZM291 235h1v2h-1ZM312 234h22v1h-22ZM312 234h1v2h-1ZM334 233h23v1h-23ZM334 233h1v2h-1ZM357 232h23v1h-23ZM357 232h1v2h-1ZM380 231h26v1h-26ZM380 231h1v2h-1ZM406 230h26v1h-26ZM406 230h1v2h-1ZM432 229h28v1h-28ZM432 229h1v2h-1ZM460 228h30v1h-30ZM460 228h1v2h-1ZM490 227h30v1h-30ZM490 227h1v2h-1ZM520 226h30v1h-30ZM520 226h1v2h-1ZM550 225h32v1h-32ZM550 225h1v2h-1ZM582 224h10v1h-10ZM582 224h1v2h-1Z" fill="#8cc8f8"></path><rect x="189" y="127" width="435" height="1" fill="#000"></rect><rect x="189" y="127" width="1" height="128" fill="#000"></rect><rect x="622" y="127" width="2" height="128" fill="#000"></rect><rect x="185" y="255" width="4" height="1" fill="#000"></rect><rect x="185" y="239" width="4" height="1" fill="#000"></rect><rect x="185" y="223" width="4" height="1" fill="#000"></rect><rect x="185" y="207" width="4" height="1" fill="#000"></rect><rect x="185" y="191" width="4" height="1" fill="#000"></rect><rect x="185" y="176" width="4" height="1" fill="#000"></rect><rect x="185" y="160" width="4" height="1" fill="#000"></rect><rect x="185" y="144" width="4" height="1" fill="#000"></rect><rect x="185" y="128" width="4" height="1" fill="#000"></rect><rect x="624" y="254" width="3" height="1" fill="#000"></rect><rect x="624" y="247" width="3" height="1" fill="#000"></rect><rect x="624" y="240" width="3" height="1" fill="#000"></rect><rect x="624" y="233" width="3" height="1" fill="#000"></rect><rect x="624" y="226" width="3" height="1" fill="#000"></rect><rect x="624" y="219" width="3" height="1" fill="#000"></rect><rect x="624" y="212" width="3" height="1" fill="#000"></rect><rect x="624" y="205" width="3" height="1" fill="#000"></rect><rect x="624" y="198" width="3" height="1" fill="#000"></rect><rect x="624" y="191" width="3" height="1" fill="#000"></rect><rect x="624" y="184" width="3" height="1" fill="#000"></rect><rect x="624" y="177" width="3" height="1" fill="#000"></rect><rect x="624" y="170" width="3" height="1" fill="#000"></rect><rect x="624" y="163" width="3" height="1" fill="#000"></rect><rect x="624" y="156" width="3" height="1" fill="#000"></rect><rect x="624" y="149" width="3" height="1" fill="#000"></rect><rect x="624" y="142" width="3" height="1" fill="#000"></rect><rect x="624" y="135" width="3" height="1" fill="#000"></rect><rect x="624" y="128" width="3" height="1" fill="#000"></rect><rect x="190" y="285" width="432" height="126" fill="url(#pg)"></rect><rect x="190" y="399" width="432" height="1" fill="#1e1e1e"></rect><rect x="190" y="386" width="432" height="1" fill="#1e1e1e"></rect><rect x="190" y="374" width="432" height="1" fill="#1e1e1e"></rect><rect x="190" y="361" width="432" height="1" fill="#1e1e1e"></rect><rect x="190" y="349" width="432" height="1" fill="#1e1e1e"></rect><rect x="190" y="336" width="432" height="1" fill="#1e1e1e"></rect><rect x="190" y="323" width="432" height="1" fill="#1e1e1e"></rect><rect x="190" y="311" width="432" height="1" fill="#1e1e1e"></rect><rect x="190" y="298" width="432" height="1" fill="#1e1e1e"></rect><rect x="198" y="285" width="1" height="126" fill="#555555"></rect><rect x="207" y="285" width="1" height="126" fill="#555555"></rect><rect x="215" y="285" width="1" height="126" fill="#555555"></rect><rect x="224" y="285" width="1" height="126" fill="#555555"></rect><rect x="233" y="285" width="1" height="126" fill="#1e1e1e"></rect><rect x="241" y="285" width="1" height="126" fill="#555555"></rect><rect x="250" y="285" width="1" height="126" fill="#555555"></rect><rect x="259" y="285" width="1" height="126" fill="#555555"></rect><rect x="267" y="285" width="1" height="126" fill="#555555"></rect><rect x="276" y="285" width="1" height="126" fill="#1e1e1e"></rect><rect x="285" y="285" width="1" height="126" fill="#555555"></rect><rect x="293" y="285" width="1" height="126" fill="#555555"></rect><rect x="302" y="285" width="1" height="126" fill="#555555"></rect><rect x="310" y="285" width="1" height="126" fill="#555555"></rect><rect x="319" y="285" width="1" height="126" fill="#1e1e1e"></rect><rect x="328" y="285" width="1" height="126" fill="#555555"></rect><rect x="336" y="285" width="1" height="126" fill="#555555"></rect><rect x="345" y="285" width="1" height="126" fill="#555555"></rect><rect x="354" y="285" width="1" height="126" fill="#555555"></rect><rect x="362" y="285" width="1" height="126" fill="#1e1e1e"></rect><rect x="371" y="285" width="1" height="126" fill="#555555"></rect><rect x="380" y="285" width="1" height="126" fill="#555555"></rect><rect x="388" y="285" width="1" height="126" fill="#555555"></rect><rect x="397" y="285" width="1" height="126" fill="#555555"></rect><rect x="406" y="285" width="1" height="126" fill="#1e1e1e"></rect><rect x="414" y="285" width="1" height="126" fill="#555555"></rect><rect x="423" y="285" width="1" height="126" fill="#555555"></rect><rect x="431" y="285" width="1" height="126" fill="#555555"></rect><rect x="440" y="285" width="1" height="126" fill="#555555"></rect><rect x="449" y="285" width="1" height="126" fill="#1e1e1e"></rect><rect x="457" y="285" width="1" height="126" fill="#555555"></rect><rect x="466" y="285" width="1" height="126" fill="#555555"></rect><rect x="475" y="285" width="1" height="126" fill="#555555"></rect><rect x="483" y="285" width="1" height="126" fill="#555555"></rect><rect x="492" y="285" width="1" height="126" fill="#1e1e1e"></rect><rect x="501" y="285" width="1" height="126" fill="#555555"></rect><rect x="509" y="285" width="1" height="126" fill="#555555"></rect><rect x="518" y="285" width="1" height="126" fill="#555555"></rect><rect x="526" y="285" width="1" height="126" fill="#555555"></rect><rect x="535" y="285" width="1" height="126" fill="#1e1e1e"></rect><rect x="544" y="285" width="1" height="126" fill="#555555"></rect><rect x="552" y="285" width="1" height="126" fill="#555555"></rect><rect x="561" y="285" width="1" height="126" fill="#555555"></rect><rect x="570" y="285" width="1" height="126" fill="#555555"></rect><rect x="578" y="285" width="1" height="126" fill="#1e1e1e"></rect><rect x="587" y="285" width="1" height="126" fill="#555555"></rect><rect x="596" y="285" width="1" height="126" fill="#555555"></rect><rect x="604" y="285" width="1" height="126" fill="#555555"></rect><rect x="613" y="285" width="1" height="126" fill="#555555"></rect><rect x="190" y="411" width="432" height="1" fill="#000"></rect><rect x="592" y="285" width="1" height="126" fill="#38c8f0"></rect><path d="M190 361h1V412h-1ZM191 361h1V412h-1ZM192 386h1V412h-1ZM193 374h1V412h-1ZM194 374h1V412h-1ZM195 386h1V412h-1ZM196 386h1V412h-1ZM197 386h1V412h-1ZM198 386h1V412h-1ZM199 374h1V412h-1ZM200 386h1V412h-1ZM201 374h1V412h-1ZM202 386h1V412h-1ZM203 386h1V412h-1ZM204 386h1V412h-1ZM205 386h1V412h-1ZM206 374h1V412h-1ZM207 386h1V412h-1ZM208 386h1V412h-1ZM209 386h1V412h-1ZM210 374h1V412h-1ZM211 386h1V412h-1ZM212 374h1V412h-1ZM213 386h1V412h-1ZM214 374h1V412h-1ZM215 386h1V412h-1ZM216 374h1V412h-1ZM217 374h1V412h-1ZM218 386h1V412h-1ZM219 374h1V412h-1ZM220 374h1V412h-1ZM221 386h1V412h-1ZM222 386h1V412h-1ZM223 386h1V412h-1ZM224 374h1V412h-1ZM225 374h1V412h-1ZM226 374h1V412h-1ZM227 386h1V412h-1ZM228 386h1V412h-1ZM229 386h1V412h-1ZM230 374h1V412h-1ZM231 386h1V412h-1ZM232 386h1V412h-1ZM233 386h1V412h-1ZM234 386h1V412h-1ZM235 374h1V412h-1ZM236 386h1V412h-1ZM237 361h1V412h-1ZM238 386h1V412h-1ZM239 386h1V412h-1ZM240 386h1V412h-1ZM241 349h1V412h-1ZM242 349h1V412h-1ZM243 386h1V412h-1ZM244 374h1V412h-1ZM245 386h1V412h-1ZM246 374h1V412h-1ZM247 386h1V412h-1ZM248 386h1V412h-1ZM249 386h1V412h-1ZM250 374h1V412h-1ZM251 374h1V412h-1ZM252 386h1V412h-1ZM253 386h1V412h-1ZM254 374h1V412h-1ZM255 374h1V412h-1ZM256 361h1V412h-1ZM257 386h1V412h-1ZM258 386h1V412h-1ZM259 386h1V412h-1ZM260 374h1V412h-1ZM261 386h1V412h-1ZM262 386h1V412h-1ZM263 386h1V412h-1ZM264 386h1V412h-1ZM265 386h1V412h-1ZM266 374h1V412h-1ZM267 374h1V412h-1ZM268 374h1V412h-1ZM269 374h1V412h-1ZM270 374h1V412h-1ZM271 374h1V412h-1ZM272 386h1V412h-1ZM273 374h1V412h-1ZM274 374h1V412h-1ZM275 374h1V412h-1ZM276 349h1V412h-1ZM277 374h1V412h-1ZM278 349h1V412h-1ZM279 374h1V412h-1ZM280 361h1V412h-1ZM281 374h1V412h-1ZM282 349h1V412h-1ZM283 374h1V412h-1ZM284 349h1V412h-1ZM285 374h1V412h-1ZM286 374h1V412h-1ZM287 361h1V412h-1ZM288 361h1V412h-1ZM289 349h1V412h-1ZM290 361h1V412h-1ZM291 349h1V412h-1ZM292 361h1V412h-1ZM293 349h1V412h-1ZM294 374h1V412h-1ZM295 361h1V412h-1ZM296 361h1V412h-1ZM297 361h1V412h-1ZM298 374h1V412h-1ZM299 374h1V412h-1ZM300 374h1V412h-1ZM301 361h1V412h-1ZM302 349h1V412h-1ZM303 349h1V412h-1ZM304 374h1V412h-1ZM305 361h1V412h-1ZM306 349h1V412h-1ZM307 374h1V412h-1ZM308 349h1V412h-1ZM309 361h1V412h-1ZM310 361h1V412h-1ZM311 349h1V412h-1ZM312 361h1V412h-1ZM313 374h1V412h-1ZM314 361h1V412h-1ZM315 374h1V412h-1ZM316 336h1V412h-1ZM317 349h1V412h-1ZM318 361h1V412h-1ZM319 374h1V412h-1ZM320 361h1V412h-1ZM321 361h1V412h-1ZM322 374h1V412h-1ZM323 374h1V412h-1ZM324 374h1V412h-1ZM325 349h1V412h-1ZM326 374h1V412h-1ZM327 361h1V412h-1ZM328 374h1V412h-1ZM329 374h1V412h-1ZM330 361h1V412h-1ZM331 361h1V412h-1ZM332 374h1V412h-1ZM333 374h1V412h-1ZM334 374h1V412h-1ZM335 361h1V412h-1ZM336 349h1V412h-1ZM337 349h1V412h-1ZM338 374h1V412h-1ZM339 374h1V412h-1ZM340 349h1V412h-1ZM341 361h1V412h-1ZM342 361h1V412h-1ZM343 361h1V412h-1ZM344 361h1V412h-1ZM345 361h1V412h-1ZM346 361h1V412h-1ZM347 374h1V412h-1ZM348 374h1V412h-1ZM349 374h1V412h-1ZM350 361h1V412h-1ZM351 349h1V412h-1ZM352 349h1V412h-1ZM353 349h1V412h-1ZM354 374h1V412h-1ZM355 349h1V412h-1ZM356 361h1V412h-1ZM357 374h1V412h-1ZM358 361h1V412h-1ZM359 349h1V412h-1ZM360 374h1V412h-1ZM361 374h1V412h-1ZM362 349h1V412h-1ZM363 374h1V412h-1ZM364 374h1V412h-1ZM365 361h1V412h-1ZM366 361h1V412h-1ZM367 349h1V412h-1ZM368 349h1V412h-1ZM369 374h1V412h-1ZM370 361h1V412h-1ZM371 361h1V412h-1ZM372 361h1V412h-1ZM373 374h1V412h-1ZM374 374h1V412h-1ZM375 361h1V412h-1ZM376 361h1V412h-1ZM377 361h1V412h-1ZM378 374h1V412h-1ZM379 336h1V412h-1ZM380 311h1V412h-1ZM381 336h1V412h-1ZM382 361h1V412h-1ZM383 374h1V412h-1ZM384 374h1V412h-1ZM385 374h1V412h-1ZM386 361h1V412h-1ZM387 349h1V412h-1ZM388 349h1V412h-1ZM389 374h1V412h-1ZM390 361h1V412h-1ZM391 349h1V412h-1ZM392 336h1V412h-1ZM393 311h1V412h-1ZM394 374h1V412h-1ZM395 361h1V412h-1ZM396 361h1V412h-1ZM397 349h1V412h-1ZM398 361h1V412h-1ZM399 361h1V412h-1ZM400 374h1V412h-1ZM401 374h1V412h-1ZM402 374h1V412h-1ZM403 361h1V412h-1ZM404 374h1V412h-1ZM405 349h1V412h-1ZM406 361h1V412h-1ZM407 374h1V412h-1ZM408 374h1V412h-1ZM409 361h1V412h-1ZM410 361h1V412h-1ZM411 349h1V412h-1ZM412 336h1V412h-1ZM413 374h1V412h-1ZM414 349h1V412h-1ZM415 374h1V412h-1ZM416 349h1V412h-1ZM417 361h1V412h-1ZM418 361h1V412h-1ZM419 349h1V412h-1ZM420 361h1V412h-1ZM421 349h1V412h-1ZM422 336h1V412h-1ZM423 361h1V412h-1ZM424 374h1V412h-1ZM425 349h1V412h-1ZM426 361h1V412h-1ZM427 361h1V412h-1ZM428 361h1V412h-1ZM429 349h1V412h-1ZM430 349h1V412h-1ZM431 361h1V412h-1ZM432 374h1V412h-1ZM433 361h1V412h-1ZM434 361h1V412h-1ZM435 361h1V412h-1ZM436 374h1V412h-1ZM437 349h1V412h-1ZM438 361h1V412h-1ZM439 361h1V412h-1ZM440 349h1V412h-1ZM441 361h1V412h-1ZM442 361h1V412h-1ZM443 336h1V412h-1ZM444 361h1V412h-1ZM445 349h1V412h-1ZM446 349h1V412h-1ZM447 374h1V412h-1ZM448 361h1V412h-1ZM449 361h1V412h-1ZM450 374h1V412h-1ZM451 374h1V412h-1ZM452 361h1V412h-1ZM453 361h1V412h-1ZM454 374h1V412h-1ZM455 361h1V412h-1ZM456 361h1V412h-1ZM457 361h1V412h-1ZM458 361h1V412h-1ZM459 361h1V412h-1ZM460 374h1V412h-1ZM461 374h1V412h-1ZM462 361h1V412h-1ZM463 361h1V412h-1ZM464 374h1V412h-1ZM465 374h1V412h-1ZM466 361h1V412h-1ZM467 361h1V412h-1ZM468 361h1V412h-1ZM469 361h1V412h-1ZM470 336h1V412h-1ZM471 349h1V412h-1ZM472 323h1V412h-1ZM473 336h1V412h-1ZM474 336h1V412h-1ZM475 349h1V412h-1ZM476 361h1V412h-1ZM477 374h1V412h-1ZM478 374h1V412h-1ZM479 361h1V412h-1ZM480 374h1V412h-1ZM481 361h1V412h-1ZM482 336h1V412h-1ZM483 361h1V412h-1ZM484 349h1V412h-1ZM485 361h1V412h-1ZM486 374h1V412h-1ZM487 361h1V412h-1ZM488 374h1V412h-1ZM489 361h1V412h-1ZM490 361h1V412h-1ZM491 349h1V412h-1ZM492 361h1V412h-1ZM493 374h1V412h-1ZM494 361h1V412h-1ZM495 374h1V412h-1ZM496 361h1V412h-1ZM497 374h1V412h-1ZM498 374h1V412h-1ZM499 349h1V412h-1ZM500 374h1V412h-1ZM501 349h1V412h-1ZM502 361h1V412h-1ZM503 349h1V412h-1ZM504 374h1V412h-1ZM505 349h1V412h-1ZM506 349h1V412h-1ZM507 374h1V412h-1ZM508 336h1V412h-1ZM509 323h1V412h-1ZM510 336h1V412h-1ZM511 374h1V412h-1ZM512 374h1V412h-1ZM513 361h1V412h-1ZM514 361h1V412h-1ZM515 361h1V412h-1ZM516 361h1V412h-1ZM517 361h1V412h-1ZM518 361h1V412h-1ZM519 361h1V412h-1ZM520 336h1V412h-1ZM521 349h1V412h-1ZM522 374h1V412h-1ZM523 374h1V412h-1ZM524 349h1V412h-1ZM525 349h1V412h-1ZM526 349h1V412h-1ZM527 386h1V412h-1ZM528 386h1V412h-1ZM529 374h1V412h-1ZM530 349h1V412h-1ZM531 349h1V412h-1ZM532 374h1V412h-1ZM533 349h1V412h-1ZM534 374h1V412h-1ZM535 374h1V412h-1ZM536 374h1V412h-1ZM537 374h1V412h-1ZM538 361h1V412h-1ZM539 349h1V412h-1ZM540 349h1V412h-1ZM541 374h1V412h-1ZM542 374h1V412h-1ZM543 361h1V412h-1ZM544 349h1V412h-1ZM545 349h1V412h-1ZM546 374h1V412h-1ZM547 349h1V412h-1ZM548 374h1V412h-1ZM549 349h1V412h-1ZM550 374h1V412h-1ZM551 336h1V412h-1ZM552 374h1V412h-1ZM553 361h1V412h-1ZM554 361h1V412h-1ZM555 349h1V412h-1ZM556 374h1V412h-1ZM557 374h1V412h-1ZM558 361h1V412h-1ZM559 374h1V412h-1ZM560 349h1V412h-1ZM561 349h1V412h-1ZM562 374h1V412h-1ZM563 361h1V412h-1ZM564 374h1V412h-1ZM565 349h1V412h-1ZM566 349h1V412h-1ZM567 361h1V412h-1ZM568 361h1V412h-1ZM569 361h1V412h-1ZM570 349h1V412h-1ZM571 349h1V412h-1ZM572 361h1V412h-1ZM573 349h1V412h-1ZM574 374h1V412h-1ZM575 361h1V412h-1ZM576 374h1V412h-1ZM577 374h1V412h-1ZM578 361h1V412h-1ZM579 361h1V412h-1ZM580 386h1V412h-1ZM581 386h1V412h-1ZM582 374h1V412h-1ZM583 386h1V412h-1ZM584 361h1V412h-1ZM585 374h1V412h-1ZM586 386h1V412h-1ZM587 374h1V412h-1ZM588 374h1V412h-1ZM589 386h1V412h-1ZM590 374h1V412h-1ZM591 386h1V412h-1ZM592 361h1V412h-1Z" fill="#2AC800"></path><path d="M196 386h1V412h-1ZM204 386h1V412h-1ZM207 386h1V412h-1ZM235 374h1V412h-1ZM238 386h1V412h-1ZM239 386h1V412h-1ZM242 349h1V412h-1ZM245 386h1V412h-1ZM248 386h1V412h-1ZM251 374h1V412h-1ZM257 386h1V412h-1ZM264 386h1V412h-1ZM268 374h1V412h-1ZM271 374h1V412h-1ZM278 349h1V412h-1ZM282 349h1V412h-1ZM293 349h1V412h-1ZM299 374h1V412h-1ZM300 374h1V412h-1ZM301 361h1V412h-1ZM303 349h1V412h-1ZM307 374h1V412h-1ZM308 349h1V412h-1ZM309 361h1V412h-1ZM312 361h1V412h-1ZM317 349h1V412h-1ZM319 374h1V412h-1ZM322 374h1V412h-1ZM323 374h1V412h-1ZM332 374h1V412h-1ZM352 349h1V412h-1ZM362 349h1V412h-1ZM370 361h1V412h-1ZM376 361h1V412h-1ZM378 374h1V412h-1ZM382 361h1V412h-1ZM385 374h1V412h-1ZM391 349h1V412h-1ZM393 311h1V412h-1ZM394 374h1V412h-1ZM398 361h1V412h-1ZM400 374h1V412h-1ZM401 374h1V412h-1ZM409 361h1V412h-1ZM420 361h1V412h-1ZM423 361h1V412h-1ZM426 361h1V412h-1ZM427 361h1V412h-1ZM431 361h1V412h-1ZM450 374h1V412h-1ZM455 361h1V412h-1ZM458 361h1V412h-1ZM462 361h1V412h-1ZM466 361h1V412h-1ZM470 336h1V412h-1ZM474 336h1V412h-1ZM477 374h1V412h-1ZM478 374h1V412h-1ZM479 361h1V412h-1ZM482 336h1V412h-1ZM485 361h1V412h-1ZM486 374h1V412h-1ZM487 361h1V412h-1ZM489 361h1V412h-1ZM491 349h1V412h-1ZM495 374h1V412h-1ZM501 349h1V412h-1ZM504 374h1V412h-1ZM523 374h1V412h-1ZM531 349h1V412h-1ZM535 374h1V412h-1ZM537 374h1V412h-1ZM544 349h1V412h-1ZM546 374h1V412h-1ZM547 349h1V412h-1ZM551 336h1V412h-1ZM554 361h1V412h-1ZM555 349h1V412h-1ZM562 374h1V412h-1ZM570 349h1V412h-1ZM576 374h1V412h-1ZM577 374h1V412h-1ZM578 361h1V412h-1ZM581 386h1V412h-1Z" fill="#3CC800"></path><polyline points="190.5,325.5 191.5,322.5 192.5,333.5 193.5,316.5 194.5,304.5 195.5,312.5 196.5,329.5 197.5,325.5 198.5,321.5 199.5,316.5 200.5,316.5 201.5,329.5 202.5,327.5 203.5,318.5 204.5,315.5 205.5,313.5 206.5,316.5 207.5,323.5 208.5,316.5 209.5,321.5 210.5,324.5 211.5,312.5 212.5,326.5 213.5,322.5 214.5,329.5 215.5,324.5 216.5,328.5 217.5,342.5 218.5,337.5 219.5,326.5 220.5,335.5 221.5,328.5 222.5,337.5 223.5,329.5 224.5,332.5 225.5,336.5 226.5,326.5 227.5,316.5 228.5,312.5 229.5,318.5 230.5,322.5 231.5,322.5 232.5,324.5 233.5,322.5 234.5,325.5 235.5,322.5 236.5,323.5 237.5,328.5 238.5,318.5 239.5,322.5 240.5,316.5 241.5,313.5 242.5,328.5 243.5,319.5 244.5,323.5 245.5,330.5 246.5,320.5 247.5,316.5 248.5,316.5 249.5,317.5 250.5,318.5 251.5,329.5 252.5,324.5 253.5,329.5 254.5,312.5 255.5,310.5 256.5,322.5 257.5,325.5 258.5,314.5 259.5,313.5 260.5,327.5 261.5,320.5 262.5,323.5 263.5,330.5 264.5,318.5 265.5,316.5 266.5,328.5 267.5,323.5 268.5,328.5 269.5,333.5 270.5,325.5 271.5,336.5 272.5,336.5 273.5,337.5 274.5,323.5 275.5,322.5 276.5,328.5 277.5,324.5 278.5,327.5 279.5,330.5 280.5,328.5 281.5,332.5 282.5,322.5 283.5,331.5 284.5,325.5 285.5,323.5 286.5,326.5 287.5,339.5 288.5,324.5 289.5,325.5 290.5,333.5 291.5,324.5 292.5,339.5 293.5,339.5 294.5,336.5 295.5,331.5 296.5,327.5 297.5,344.5 298.5,333.5 299.5,328.5 300.5,335.5 301.5,339.5 302.5,339.5 303.5,330.5 304.5,326.5 305.5,337.5 306.5,341.5 307.5,340.5 308.5,340.5 309.5,337.5 310.5,330.5 311.5,339.5 312.5,330.5 313.5,332.5 314.5,327.5 315.5,327.5 316.5,341.5 317.5,324.5 318.5,340.5 319.5,341.5 320.5,339.5 321.5,326.5 322.5,333.5 323.5,330.5 324.5,330.5 325.5,332.5 326.5,339.5 327.5,326.5 328.5,329.5 329.5,337.5 330.5,338.5 331.5,329.5 332.5,325.5 333.5,324.5 334.5,333.5 335.5,326.5 336.5,342.5 337.5,343.5 338.5,330.5 339.5,332.5 340.5,339.5 341.5,338.5 342.5,328.5 343.5,327.5 344.5,327.5 345.5,333.5 346.5,328.5 347.5,326.5 348.5,342.5 349.5,324.5 350.5,336.5 351.5,330.5 352.5,324.5 353.5,327.5 354.5,335.5 355.5,337.5 356.5,326.5 357.5,326.5 358.5,339.5 359.5,331.5 360.5,339.5 361.5,336.5 362.5,340.5 363.5,338.5 364.5,325.5 365.5,325.5 366.5,330.5 367.5,333.5 368.5,332.5 369.5,337.5 370.5,329.5 371.5,330.5 372.5,339.5 373.5,341.5 374.5,334.5 375.5,328.5 376.5,330.5 377.5,330.5 378.5,324.5 379.5,327.5 380.5,331.5 381.5,340.5 382.5,337.5 383.5,324.5 384.5,339.5 385.5,336.5 386.5,328.5 387.5,326.5 388.5,340.5 389.5,331.5 390.5,328.5 391.5,334.5 392.5,329.5 393.5,338.5 394.5,337.5 395.5,329.5 396.5,332.5 397.5,331.5 398.5,341.5 399.5,334.5 400.5,323.5 401.5,330.5 402.5,325.5 403.5,323.5 404.5,322.5 405.5,329.5 406.5,324.5 407.5,325.5 408.5,320.5 409.5,313.5 410.5,310.5 411.5,311.5 412.5,324.5 413.5,319.5 414.5,311.5 415.5,322.5 416.5,326.5 417.5,323.5 418.5,313.5 419.5,313.5 420.5,316.5 421.5,312.5 422.5,322.5 423.5,319.5 424.5,325.5 425.5,315.5 426.5,311.5 427.5,319.5 428.5,323.5 429.5,323.5 430.5,319.5 431.5,319.5 432.5,326.5 433.5,316.5 434.5,328.5 435.5,325.5 436.5,322.5 437.5,335.5 438.5,335.5 439.5,325.5 440.5,331.5 441.5,322.5 442.5,328.5 443.5,327.5 444.5,320.5 445.5,323.5 446.5,333.5 447.5,325.5 448.5,329.5 449.5,329.5 450.5,321.5 451.5,316.5 452.5,317.5 453.5,323.5 454.5,323.5 455.5,320.5 456.5,318.5 457.5,322.5 458.5,312.5 459.5,319.5 460.5,312.5 461.5,315.5 462.5,326.5 463.5,323.5 464.5,326.5 465.5,303.5 466.5,318.5 467.5,319.5 468.5,322.5 469.5,316.5 470.5,323.5 471.5,323.5 472.5,316.5 473.5,318.5 474.5,312.5 475.5,327.5 476.5,317.5 477.5,314.5 478.5,312.5 479.5,316.5 480.5,318.5 481.5,327.5 482.5,321.5 483.5,324.5 484.5,319.5 485.5,315.5 486.5,322.5 487.5,314.5 488.5,327.5 489.5,324.5 490.5,325.5 491.5,317.5 492.5,308.5 493.5,325.5 494.5,318.5 495.5,316.5 496.5,315.5 497.5,321.5 498.5,332.5 499.5,329.5 500.5,325.5 501.5,324.5 502.5,337.5 503.5,326.5 504.5,318.5 505.5,322.5 506.5,321.5 507.5,314.5 508.5,334.5 509.5,319.5 510.5,322.5 511.5,316.5 512.5,316.5 513.5,310.5 514.5,318.5 515.5,320.5 516.5,315.5 517.5,314.5 518.5,318.5 519.5,312.5 520.5,314.5 521.5,326.5 522.5,311.5 523.5,310.5 524.5,313.5 525.5,313.5 526.5,318.5 527.5,323.5 528.5,324.5 529.5,312.5 530.5,320.5 531.5,315.5 532.5,309.5 533.5,326.5 534.5,321.5 535.5,316.5 536.5,314.5 537.5,323.5 538.5,315.5 539.5,308.5 540.5,314.5 541.5,325.5 542.5,323.5 543.5,310.5 544.5,305.5 545.5,319.5 546.5,322.5 547.5,324.5 548.5,318.5 549.5,333.5 550.5,325.5 551.5,316.5 552.5,335.5 553.5,324.5 554.5,322.5 555.5,330.5 556.5,323.5 557.5,329.5 558.5,318.5 559.5,332.5 560.5,314.5 561.5,326.5 562.5,331.5 563.5,319.5 564.5,328.5 565.5,325.5 566.5,317.5 567.5,322.5 568.5,317.5 569.5,316.5 570.5,312.5 571.5,320.5 572.5,317.5 573.5,315.5 574.5,321.5 575.5,325.5 576.5,317.5 577.5,326.5 578.5,319.5 579.5,327.5 580.5,315.5 581.5,318.5 582.5,315.5 583.5,324.5 584.5,315.5 585.5,328.5 586.5,325.5 587.5,319.5 588.5,323.5 589.5,314.5 590.5,325.5 591.5,321.5" stroke="#d8a8d8" stroke-width="1" fill="none"></polyline><rect x="189" y="284" width="435" height="1" fill="#000"></rect><rect x="189" y="284" width="1" height="128" fill="#000"></rect><rect x="622" y="284" width="2" height="128" fill="#000"></rect><rect x="185" y="412" width="4" height="1" fill="#000"></rect><rect x="185" y="399" width="4" height="1" fill="#000"></rect><rect x="185" y="386" width="4" height="1" fill="#000"></rect><rect x="185" y="374" width="4" height="1" fill="#000"></rect><rect x="185" y="361" width="4" height="1" fill="#000"></rect><rect x="185" y="349" width="4" height="1" fill="#000"></rect><rect x="185" y="336" width="4" height="1" fill="#000"></rect><rect x="185" y="323" width="4" height="1" fill="#000"></rect><rect x="185" y="311" width="4" height="1" fill="#000"></rect><rect x="185" y="298" width="4" height="1" fill="#000"></rect><rect x="185" y="286" width="4" height="1" fill="#000"></rect><rect x="191" y="117" width="6" height="8" fill="#007800"></rect><rect x="223" y="117" width="6" height="8" fill="#90d0f8"></rect><rect x="293" y="117" width="6" height="8" fill="#f090f0"></rect><rect x="191" y="274" width="6" height="8" fill="#007800"></rect><rect x="219" y="274" width="6" height="8" fill="#d0a0d0"></rect><rect x="254" y="271" width="6" height="3" fill="#000"></rect></svg>
<div class="t" style="left: 200px; top: 116.19px; font-size: 11px; line-height: 11px; color: rgb(0, 0, 0); transform: scaleX(0.9084);">LDC</div>
<div class="t" style="left: 232.2px; top: 116.19px; font-size: 11px; line-height: 11px; color: rgb(0, 0, 0); transform: scaleX(0.9608);">Read speed</div>
<div class="t" style="left: 302.5px; top: 116.19px; font-size: 11px; line-height: 11px; color: rgb(0, 0, 0); transform: scaleX(0.9744);">Write speed</div>
<div class="t" style="right: 475.3px; top: 233.65px; font-size: 11px; line-height: 11px; color: rgb(0, 0, 0); transform-origin: 100% 0px; transform: scaleX(0.93);">50</div>
<div class="t" style="right: 475.3px; top: 217.82px; font-size: 11px; line-height: 11px; color: rgb(0, 0, 0); transform-origin: 100% 0px; transform: scaleX(0.93);">100</div>
<div class="t" style="right: 475.3px; top: 201.98px; font-size: 11px; line-height: 11px; color: rgb(0, 0, 0); transform-origin: 100% 0px; transform: scaleX(0.93);">150</div>
<div class="t" style="right: 475.3px; top: 186.15px; font-size: 11px; line-height: 11px; color: rgb(0, 0, 0); transform-origin: 100% 0px; transform: scaleX(0.93);">200</div>
<div class="t" style="right: 475.3px; top: 170.31px; font-size: 11px; line-height: 11px; color: rgb(0, 0, 0); transform-origin: 100% 0px; transform: scaleX(0.93);">250</div>
<div class="t" style="right: 475.3px; top: 154.48px; font-size: 11px; line-height: 11px; color: rgb(0, 0, 0); transform-origin: 100% 0px; transform: scaleX(0.93);">300</div>
<div class="t" style="right: 475.3px; top: 138.64px; font-size: 11px; line-height: 11px; color: rgb(0, 0, 0); transform-origin: 100% 0px; transform: scaleX(0.93);">350</div>
<div class="t" style="right: 475.3px; top: 122.81px; font-size: 11px; line-height: 11px; color: rgb(0, 0, 0); transform-origin: 100% 0px; transform: scaleX(0.93);">400</div>
<div class="t" style="left: 626px; top: 235.41px; font-size: 11px; line-height: 11px; color: rgb(0, 0, 0); transform: scaleX(0.94);">2 X</div>
<div class="t" style="left: 626px; top: 221.33px; font-size: 11px; line-height: 11px; color: rgb(0, 0, 0); transform: scaleX(0.94);">4 X</div>
<div class="t" style="left: 626px; top: 207.25px; font-size: 11px; line-height: 11px; color: rgb(0, 0, 0); transform: scaleX(0.94);">6 X</div>
<div class="t" style="left: 626px; top: 193.17px; font-size: 11px; line-height: 11px; color: rgb(0, 0, 0); transform: scaleX(0.94);">8 X</div>
<div class="t" style="left: 626px; top: 179.09px; font-size: 11px; line-height: 11px; color: rgb(0, 0, 0); transform: scaleX(0.94);">10 X</div>
<div class="t" style="left: 626px; top: 165.01px; font-size: 11px; line-height: 11px; color: rgb(0, 0, 0); transform: scaleX(0.94);">12 X</div>
<div class="t" style="left: 626px; top: 150.93px; font-size: 11px; line-height: 11px; color: rgb(0, 0, 0); transform: scaleX(0.94);">14 X</div>
<div class="t" style="left: 626px; top: 136.85px; font-size: 11px; line-height: 11px; color: rgb(0, 0, 0); transform: scaleX(0.94);">16 X</div>
<div class="t" style="left: 626px; top: 122.77px; font-size: 11px; line-height: 11px; color: rgb(0, 0, 0); transform: scaleX(0.94);">18 X</div>
<div class="t" style="left: 182.66px; top: 255.69px; font-size: 11px; line-height: 11px; color: rgb(0, 0, 0); transform: scaleX(0.92);">0.0</div>
<div class="t" style="left: 225.86px; top: 255.69px; font-size: 11px; line-height: 11px; color: rgb(0, 0, 0); transform: scaleX(0.92);">2.5</div>
<div class="t" style="left: 269.06px; top: 255.69px; font-size: 11px; line-height: 11px; color: rgb(0, 0, 0); transform: scaleX(0.92);">5.0</div>
<div class="t" style="left: 312.26px; top: 255.69px; font-size: 11px; line-height: 11px; color: rgb(0, 0, 0); transform: scaleX(0.92);">7.5</div>
<div class="t" style="left: 352.65px; top: 255.69px; font-size: 11px; line-height: 11px; color: rgb(0, 0, 0); transform: scaleX(0.92);">10.0</div>
<div class="t" style="left: 395.85px; top: 255.69px; font-size: 11px; line-height: 11px; color: rgb(0, 0, 0); transform: scaleX(0.92);">12.5</div>
<div class="t" style="left: 439.05px; top: 255.69px; font-size: 11px; line-height: 11px; color: rgb(0, 0, 0); transform: scaleX(0.92);">15.0</div>
<div class="t" style="left: 482.25px; top: 255.69px; font-size: 11px; line-height: 11px; color: rgb(0, 0, 0); transform: scaleX(0.92);">17.5</div>
<div class="t" style="left: 525.45px; top: 255.69px; font-size: 11px; line-height: 11px; color: rgb(0, 0, 0); transform: scaleX(0.92);">20.0</div>
<div class="t" style="left: 568.65px; top: 255.69px; font-size: 11px; line-height: 11px; color: rgb(0, 0, 0); transform: scaleX(0.92);">22.5</div>
<div class="t" style="left: 602.75px; top: 255.69px; font-size: 11px; line-height: 11px; color: rgb(0, 0, 0); transform: scaleX(0.9539);">25.0 GB</div>
<div class="t" style="left: 200px; top: 272.69px; font-size: 11px; line-height: 11px; color: rgb(0, 0, 0); transform: scaleX(0.874);">BIS</div>
<div class="t" style="left: 228.2px; top: 272.69px; font-size: 11px; line-height: 11px; color: rgb(0, 0, 0); transform: scaleX(0.9311);">Jitter</div>
<div class="t" style="right: 475.3px; top: 393.69px; font-size: 11px; line-height: 11px; color: rgb(0, 0, 0); transform-origin: 100% 0px; transform: scaleX(0.93);">1</div>
<div class="t" style="right: 475.3px; top: 381.09px; font-size: 11px; line-height: 11px; color: rgb(0, 0, 0); transform-origin: 100% 0px; transform: scaleX(0.93);">2</div>
<div class="t" style="right: 475.3px; top: 368.49px; font-size: 11px; line-height: 11px; color: rgb(0, 0, 0); transform-origin: 100% 0px; transform: scaleX(0.93);">3</div>
<div class="t" style="right: 475.3px; top: 355.89px; font-size: 11px; line-height: 11px; color: rgb(0, 0, 0); transform-origin: 100% 0px; transform: scaleX(0.93);">4</div>
<div class="t" style="right: 475.3px; top: 343.29px; font-size: 11px; line-height: 11px; color: rgb(0, 0, 0); transform-origin: 100% 0px; transform: scaleX(0.93);">5</div>
<div class="t" style="right: 475.3px; top: 330.69px; font-size: 11px; line-height: 11px; color: rgb(0, 0, 0); transform-origin: 100% 0px; transform: scaleX(0.93);">6</div>
<div class="t" style="right: 475.3px; top: 318.09px; font-size: 11px; line-height: 11px; color: rgb(0, 0, 0); transform-origin: 100% 0px; transform: scaleX(0.93);">7</div>
<div class="t" style="right: 475.3px; top: 305.49px; font-size: 11px; line-height: 11px; color: rgb(0, 0, 0); transform-origin: 100% 0px; transform: scaleX(0.93);">8</div>
<div class="t" style="right: 475.3px; top: 292.89px; font-size: 11px; line-height: 11px; color: rgb(0, 0, 0); transform-origin: 100% 0px; transform: scaleX(0.93);">9</div>
<div class="t" style="right: 475.3px; top: 280.29px; font-size: 11px; line-height: 11px; color: rgb(0, 0, 0); transform-origin: 100% 0px; transform: scaleX(0.93);">10</div>
<div class="t" style="left: 626px; top: 279.79px; font-size: 11px; line-height: 11px; color: rgb(0, 0, 0); transform: scaleX(0.95);">20%</div>
<div class="t" style="left: 626px; top: 304.99px; font-size: 11px; line-height: 11px; color: rgb(0, 0, 0); transform: scaleX(0.95);">16%</div>
<div class="t" style="left: 626px; top: 330.19px; font-size: 11px; line-height: 11px; color: rgb(0, 0, 0); transform: scaleX(0.95);">12%</div>
<div class="t" style="left: 626px; top: 355.39px; font-size: 11px; line-height: 11px; color: rgb(0, 0, 0); transform: scaleX(0.95);">8%</div>
<div class="t" style="left: 626px; top: 380.59px; font-size: 11px; line-height: 11px; color: rgb(0, 0, 0); transform: scaleX(0.95);">4%</div>
<div class="t" style="left: 182.66px; top: 412.69px; font-size: 11px; line-height: 11px; color: rgb(0, 0, 0); transform: scaleX(0.92);">0.0</div>
<div class="t" style="left: 225.86px; top: 412.69px; font-size: 11px; line-height: 11px; color: rgb(0, 0, 0); transform: scaleX(0.92);">2.5</div>
<div class="t" style="left: 269.06px; top: 412.69px; font-size: 11px; line-height: 11px; color: rgb(0, 0, 0); transform: scaleX(0.92);">5.0</div>
<div class="t" style="left: 312.26px; top: 412.69px; font-size: 11px; line-height: 11px; color: rgb(0, 0, 0); transform: scaleX(0.92);">7.5</div>
<div class="t" style="left: 352.65px; top: 412.69px; font-size: 11px; line-height: 11px; color: rgb(0, 0, 0); transform: scaleX(0.92);">10.0</div>
<div class="t" style="left: 395.85px; top: 412.69px; font-size: 11px; line-height: 11px; color: rgb(0, 0, 0); transform: scaleX(0.92);">12.5</div>
<div class="t" style="left: 439.05px; top: 412.69px; font-size: 11px; line-height: 11px; color: rgb(0, 0, 0); transform: scaleX(0.92);">15.0</div>
<div class="t" style="left: 482.25px; top: 412.69px; font-size: 11px; line-height: 11px; color: rgb(0, 0, 0); transform: scaleX(0.92);">17.5</div>
<div class="t" style="left: 525.45px; top: 412.69px; font-size: 11px; line-height: 11px; color: rgb(0, 0, 0); transform: scaleX(0.92);">20.0</div>
<div class="t" style="left: 568.65px; top: 412.69px; font-size: 11px; line-height: 11px; color: rgb(0, 0, 0); transform: scaleX(0.92);">22.5</div>
<div class="t" style="left: 602.75px; top: 412.69px; font-size: 11px; line-height: 11px; color: rgb(0, 0, 0); transform: scaleX(0.9539);">25.0 GB</div>
<div class="t" style="right: 388px; top: 432.34px; font-size: 12px; line-height: 12px; color: rgb(0, 0, 0); transform-origin: 100% 0px; transform: scaleX(0.8245);">LDC</div>
<div class="t" style="right: 334px; top: 432.34px; font-size: 12px; line-height: 12px; color: rgb(0, 0, 0); transform-origin: 100% 0px; transform: scaleX(0.791);">BIS</div>
<div class="t" style="left: 162.5px; top: 449.34px; font-size: 12px; line-height: 12px; color: rgb(0, 0, 0); transform: scaleX(0.9136);">Avg</div>
<div class="t" style="left: 162.5px; top: 464.84px; font-size: 12px; line-height: 12px; color: rgb(0, 0, 0); transform: scaleX(0.913);">Max</div>
<div class="t" style="left: 161.5px; top: 480.84px; font-size: 12px; line-height: 12px; color: rgb(0, 0, 0); transform: scaleX(0.9227);">Total</div>
<div class="t" style="right: 388px; top: 449.34px; font-size: 12px; line-height: 12px; color: rgb(36, 36, 244); transform-origin: 100% 0px; transform: scaleX(0.8862);">9.08</div>
<div class="t" style="right: 388px; top: 464.84px; font-size: 12px; line-height: 12px; color: rgb(36, 36, 244); transform-origin: 100% 0px; transform: scaleX(0.8786);">332</div>
<div class="t" style="right: 388px; top: 480.84px; font-size: 12px; line-height: 12px; color: rgb(36, 36, 244); transform-origin: 100% 0px; transform: scaleX(0.9118);">3465530</div>
<div class="t" style="right: 334px; top: 449.34px; font-size: 12px; line-height: 12px; color: rgb(36, 36, 244); transform-origin: 100% 0px; transform: scaleX(0.8776);">0.24</div>
<div class="t" style="right: 334px; top: 464.84px; font-size: 12px; line-height: 12px; color: rgb(36, 36, 244); transform-origin: 100% 0px; transform: scaleX(0.8224);">8</div>
<div class="t" style="right: 334px; top: 480.84px; font-size: 12px; line-height: 12px; color: rgb(36, 36, 244); transform-origin: 100% 0px; transform: scaleX(0.8689);">92582</div>
<div class="r" style="left:395px;top:432px;width:13px;height:13px;background:#fff;border:1px solid #333"></div>
<svg width="13" height="13" style="left:395px;top:432px"><path d="M2.5 6.5 L5 9 L10.5 3.5" stroke="#333" stroke-width="1.2" fill="none"></path></svg>
<div class="t" style="left: 417.5px; top: 433.34px; font-size: 12px; line-height: 12px; color: rgb(0, 0, 0); transform: scaleX(0.9302);">Jitter</div>
<div class="t" style="right: 219px; top: 449.34px; font-size: 12px; line-height: 12px; color: rgb(36, 36, 244); transform-origin: 100% 0px; transform: scaleX(0.8433);">13.5%</div>
<div class="t" style="right: 219px; top: 465.34px; font-size: 12px; line-height: 12px; color: rgb(36, 36, 244); transform-origin: 100% 0px; transform: scaleX(0.8433);">16.9%</div>
<div class="t" style="left: 461.6px; top: 437.34px; font-size: 12px; line-height: 12px; color: rgb(0, 0, 0); transform: scaleX(0.8875);">Speed</div>
<div class="t" style="left: 520.2px; top: 437.34px; font-size: 12px; line-height: 12px; color: rgb(36, 36, 244); transform: scaleX(0.8443);">4.19 X</div>
<div class="t" style="left: 461.6px; top: 464.84px; font-size: 12px; line-height: 12px; color: rgb(0, 0, 0); transform: scaleX(0.9531);">Position</div>
<div class="t" style="left: 520.2px; top: 464.84px; font-size: 12px; line-height: 12px; color: rgb(36, 36, 244); transform: scaleX(0.8994);">23862 MB</div>
<div class="t" style="left: 461.6px; top: 481.34px; font-size: 12px; line-height: 12px; color: rgb(0, 0, 0); transform: scaleX(0.8718);">Samples</div>
<div class="t" style="left: 520.2px; top: 481.34px; font-size: 12px; line-height: 12px; color: rgb(36, 36, 244); transform: scaleX(0.874);">380424</div>
<div class="r" style="left:575px;top:430px;width:75px;height:21px;background:#E1E1E1;border:1px solid #ADADAD"></div>
<div class="t" style="left: 578.7px; top: 435.34px; font-size: 12px; line-height: 12px; color: rgb(0, 0, 0); transform: scaleX(0.8776);">4.0 X</div>
<svg width="12" height="8" style="left:636px;top:437px"><path d="M0.5 1.5 L5 6 L9.5 1.5" stroke="#555" stroke-width="1" fill="none"></path></svg>
<div class="r" style="left:576px;top:454px;width:73px;height:21px;background:#E1E1E1;border:1px solid #ADADAD"></div>
<div class="t" style="left: 590.45px; top: 459.34px; font-size: 12px; line-height: 12px; color: rgb(0, 0, 0); transform: scaleX(0.9928);">Start full</div>
<div class="r" style="left:575px;top:481px;width:73px;height:21px;background:#E1E1E1;border:1px solid #ADADAD"></div>
<div class="t" style="left: 587.6px; top: 485.34px; font-size: 12px; line-height: 12px; color: rgb(0, 0, 0); transform: scaleX(0.9563);">Start part</div>
</body></html>
